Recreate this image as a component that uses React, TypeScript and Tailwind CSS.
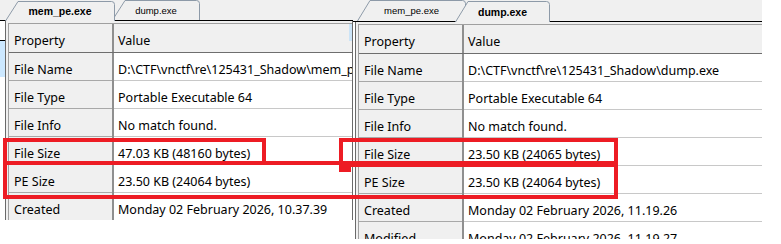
import React from "react";

type Row = [string, string];

const leftRows: Row[] = [
  ["File Name", "D:\\CTF\\vnctf\\re\\125431_Shadow\\mem_pe.exe"],
  ["File Type", "Portable Executable 64"],
  ["File Info", "No match found."],
  ["File Size", "47.03 KB (48160 bytes)"],
  ["PE Size", "23.50 KB (24064 bytes)"],
  ["Created", "Monday 02 February 2026, 10.37.39"],
];

const rightRows: Row[] = [
  ["File Name", "D:\\CTF\\vnctf\\re\\125431_Shadow\\dump.exe"],
  ["File Type", "Portable Executable 64"],
  ["File Info", "No match found."],
  ["File Size", "23.50 KB (24065 bytes)"],
  ["PE Size", "23.50 KB (24064 bytes)"],
  ["Created", "Monday 02 February 2026, 11.19.26"],
  ["Modified", "Monday 02 February 2026, 11.19.27"],
];

function Tab({
  label,
  active,
  w,
  h,
  className,
}: {
  label: string;
  active?: boolean;
  w: number;
  h: number;
  className: string;
}) {
  const r = 3;
  const s = 13;
  const outline = `M0.5 ${h} L${s} 0.5 H${w - r - 0.5} Q${w - 0.5} 0.5 ${w - 0.5} ${r + 0.5} V${h}`;
  return (
    <div
      className={`relative shrink-0 flex items-center justify-center pt-[1px] ${active ? "z-10" : "z-0"} ${className}`}
    >
      <svg
        className="absolute inset-0 w-full h-full"
        viewBox={`0 0 ${w} ${h}`}
        preserveAspectRatio="none"
      >
        <path d={outline + " Z"} fill="#f0f0f0" stroke="none" />
        <path d={outline} fill="none" stroke="#8d9aa8" strokeWidth="1" />
      </svg>
      <span
        className={`relative font-['Liberation_Sans',sans-serif] text-black leading-none ${active ? "text-[10.5px] font-bold" : "text-[9.5px]"}`}
      >
        {label}
      </span>
    </div>
  );
}

function Table({ rows }: { rows: Row[] }) {
  return (
    <div className="border-t border-l border-[#a0a0a0] font-['Noto_Sans',sans-serif] text-[12.5px] text-black">
      <div className="flex h-[29px] border-b border-[#6e6e6e] bg-[#f0f0f0]">
        <div className="w-[103px] shrink-0 pl-[5px] flex items-center pt-[7px]">
          Property
        </div>
        <div className="w-[2px] shrink-0 bg-[#8f8f8f]" />
        <div className="flex-1 pl-[4px] flex items-center pt-[7px]">Value</div>
      </div>
      {rows.map(([k, v]) => (
        <div key={k} className="flex h-[28px]">
          <div className="w-[103px] shrink-0 pl-[5px] flex items-center pt-[7px] bg-[#f0f0f0] border-b border-[#a8a8a8]">
            {k}
          </div>
          <div className="w-[2px] shrink-0 bg-[#8f8f8f]" />
          <div className="flex-1 min-w-0 pl-[4px] flex items-center pt-[7px] bg-white border-b border-[#c8c8c8] whitespace-nowrap overflow-hidden">
            {v}
          </div>
        </div>
      ))}
    </div>
  );
}

export default function App() {
  return (
    <div className="relative w-[781px] h-[244px] bg-white overflow-hidden flex items-start">
      {/* left capture */}
      <div className="w-[353px] h-[220px] shrink-0 overflow-hidden flex flex-col">
        <div className="relative flex items-end h-[24px] pl-[5px] bg-[#f0f0f0]">
          <div className="absolute inset-x-0 bottom-0 h-px bg-black z-[5]" />
          <Tab label="mem_pe.exe" active w={110} h={20} className="w-[110px] h-[20px]" />
          <Tab label="dump.exe" w={88} h={20} className="w-[88px] h-[20px] -ml-[3px] mb-px" />
        </div>
        <div className="flex flex-1">
          <div className="w-[5px] shrink-0 flex flex-col bg-white">
            <div className="h-[19px]" />
            <div className="h-px bg-black" />
            <div className="h-[36px] bg-[#cce8ff]" />
          </div>
          <div className="flex-1 min-w-0 border-l border-r border-[#6a6a6a] pt-[2px] pl-[2px] bg-[#f0f0f0] relative">
            <Table rows={leftRows} />
            <div className="absolute right-0 top-[3px] w-[3px] h-[17px] bg-[#cce4f7]" />
          </div>
        </div>
      </div>

      {/* right capture */}
      <div className="w-[409px] h-[239px] shrink-0 overflow-hidden flex flex-col">
        <div className="relative flex items-end h-[25px] pl-[4px] bg-[#f0f0f0]">
          <div className="absolute inset-x-0 bottom-0 h-px bg-black z-[5]" />
          <Tab label="mem_pe.exe" w={109} h={21} className="w-[109px] h-[21px] mb-px" />
          <Tab label="dump.exe" active w={95} h={21} className="w-[95px] h-[21px] -ml-[11px]" />
        </div>
        <div className="flex-1 pl-[2px] bg-white">
          <div className="h-full border-l border-[#6a6a6a] pt-[2px] pl-[2px] bg-[#f0f0f0]">
            <Table rows={rightRows} />
          </div>
        </div>
      </div>

      {/* red annotation boxes */}
      <div className="absolute left-[3px] top-[138px] w-[263px] h-[27px] border-4 border-[#ed1c24]" />
      <div className="absolute left-[3px] top-[161px] w-[615px] h-[38px] border-4 border-[#ed1c24]" />
      <div className="absolute left-[339px] top-[138px] w-[279px] h-[29px] border-4 border-[#ed1c24]" />
      <div className="absolute left-[339px] top-[167px] w-[12px] h-[5px] bg-[#ed1c24]" />
    </div>
  );
}
